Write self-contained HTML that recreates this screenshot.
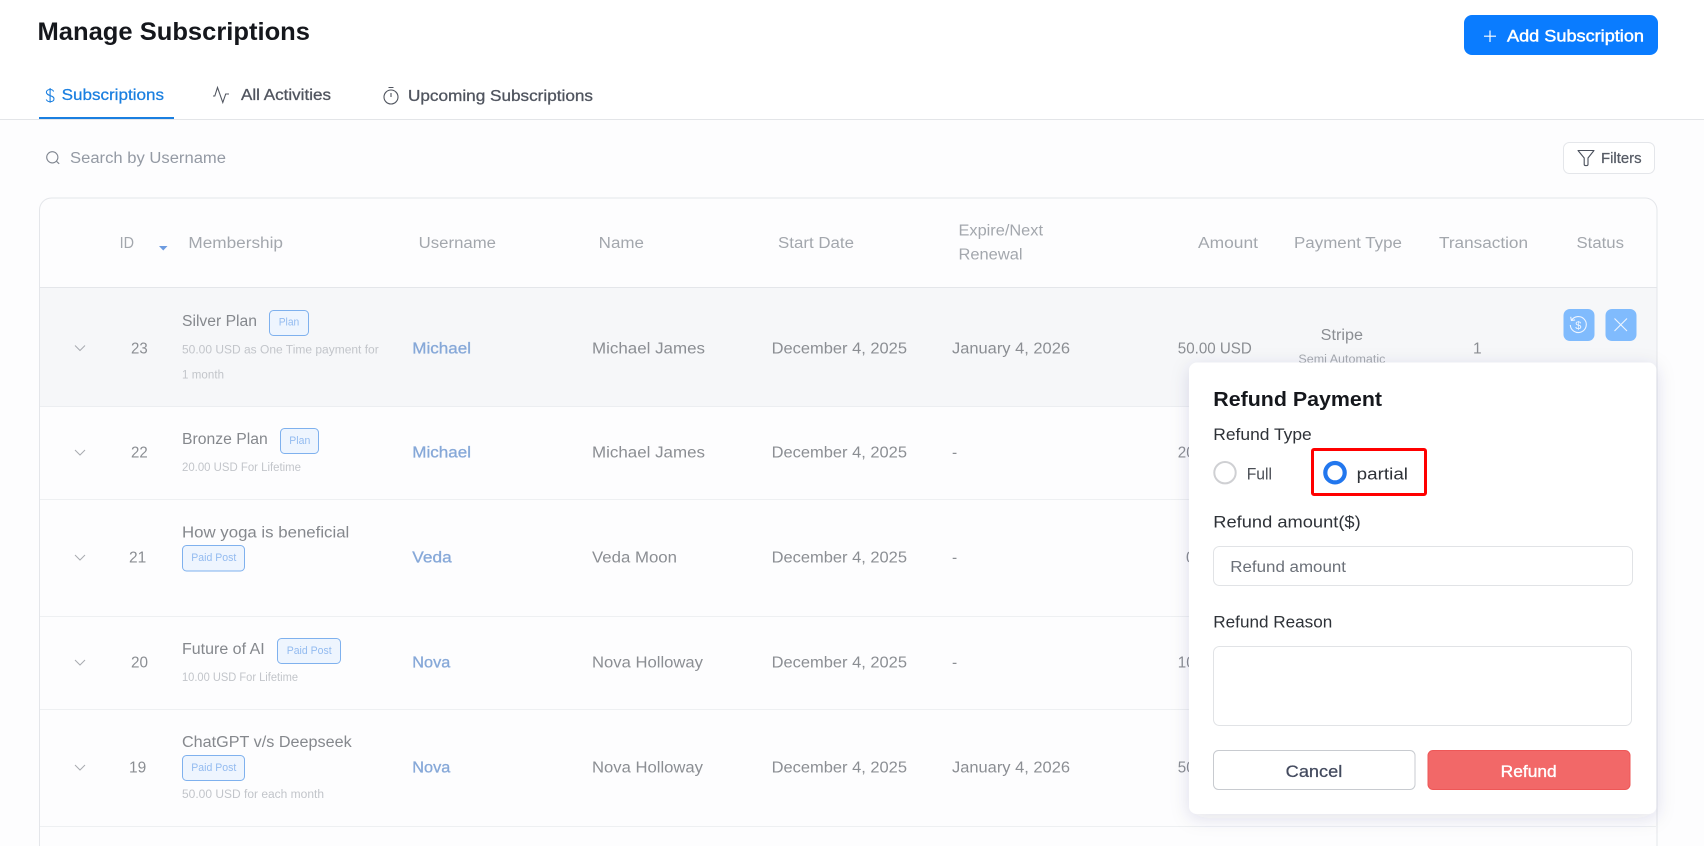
<!DOCTYPE html>
<html lang="en"><head><meta charset="utf-8"><title>Manage Subscriptions</title>
<style>
html,body{margin:0;padding:0;width:1704px;height:846px;overflow:hidden;background:#fff}
svg{display:block}
text{font-family:"Liberation Sans",Arial,sans-serif;white-space:pre}
.h{font-size:15.5px;fill:#a3a7ad}
.c{font-size:15.5px;fill:#8b8e93}
.t{font-size:15.5px;fill:#85888d}
.s{font-size:11.5px;fill:#c2c5ca}
.u{font-size:15.5px;fill:#86a8d8;stroke:#86a8d8;stroke-width:.3}
.b{font-size:11px;fill:#93bbf0}
.br{fill:#eef5fe;stroke:#7fb1ee;stroke-width:1}
.l{stroke:#eef0f2;stroke-width:1}
.chev{fill:none;stroke:#a8abb0;stroke-width:1}
.m{font-size:16.5px;fill:#2e3238}
</style></head>
<body>
<svg xmlns="http://www.w3.org/2000/svg" width="1704" height="846" viewBox="0 0 1704 846">
<rect width="1704" height="846" fill="#fff"/>
<rect y="120" width="1704" height="726" fill="#fdfdfe"/>

<!-- header -->
<text x="37.500" y="40" font-size="25" font-weight="700" fill="#15171c" textLength="272.500" lengthAdjust="spacingAndGlyphs">Manage Subscriptions</text>
<rect x="1464" y="15" width="194" height="40" rx="8" fill="#0a7cff"/>
<path d="M1490 30.500v11.500M1484 36.200h12" stroke="#fff" stroke-width="1.200" fill="none"/>
<text x="1507" y="41.700" font-size="16.500" fill="#fff" stroke="#fff" stroke-width=".45" textLength="137" lengthAdjust="spacingAndGlyphs">Add Subscription</text>

<!-- tabs -->
<path d="M53.600 91.500c-.5-1.300-1.800-2-3.400-2-2.300 0-3.800 1.100-3.800 2.800 0 4 7.600 2.600 7.600 6.600 0 1.700-1.600 2.800-3.900 2.800-1.900 0-3.300-.8-3.800-2.200M50.100 88v14.800" fill="none" stroke="#1a7fe0" stroke-width="1.100"/>
<text x="61.600" y="100" font-size="15.500" fill="#1a7fe0" stroke="#1a7fe0" stroke-width=".25" textLength="102.400" lengthAdjust="spacingAndGlyphs">Subscriptions</text>
<rect x="39" y="117" width="135" height="2.200" fill="#1a7fe0"/>
<path d="M213 96h1.800l2.700-8.500 5.300 15 2.900-8.500h3.300" fill="none" stroke="#50555f" stroke-width="1.100"/>
<text x="241" y="100" font-size="15.500" fill="#50555f" stroke="#50555f" stroke-width=".3" textLength="90" lengthAdjust="spacingAndGlyphs">All Activities</text>
<circle cx="391" cy="97" r="7" fill="none" stroke="#50555f" stroke-width="1.100"/>
<path d="M388.500 87.500h5M391 93v4" fill="none" stroke="#50555f" stroke-width="1.100"/>
<text x="408" y="101" font-size="15.500" fill="#50555f" stroke="#50555f" stroke-width=".3" textLength="185" lengthAdjust="spacingAndGlyphs">Upcoming Subscriptions</text>
<rect y="119" width="1704" height="1" fill="#e3e5e8"/>

<!-- search + filter -->
<circle cx="52.300" cy="157.300" r="5.600" fill="none" stroke="#7f858f" stroke-width="1.100"/>
<path d="M56.500 161.300l2.700 2.500" stroke="#7f858f" stroke-width="1.100"/>
<text x="70" y="163" font-size="15.500" fill="#949aa4" textLength="156" lengthAdjust="spacingAndGlyphs">Search by Username</text>
<rect x="1563.500" y="142.500" width="91" height="31" rx="6" fill="#fff" stroke="#e4e6ea"/>
<path d="M1578 150.500h16l-6 7.500v6.500c0 1.500-3.800 1.500-3.800 0v-6.500z" fill="none" stroke="#4a505c" stroke-width="1.100" stroke-linejoin="round"/>
<text x="1601" y="163" font-size="14.500" fill="#575c66" stroke="#575c66" stroke-width=".25" textLength="40.600" lengthAdjust="spacingAndGlyphs">Filters</text>

<!-- table -->
<path d="M39.500 846V210a12 12 0 0 1 12-12H1645a12 12 0 0 1 12 12V846" fill="#fdfdfe" stroke="#e4e6ea"/>
<rect x="40" y="288" width="1616.500" height="119" fill="#f6f7f9"/>
<rect x="40" y="287" width="1616.500" height="1" fill="#e4e6ea"/>

<text class="h" x="119.600" y="248" textLength="14.400" lengthAdjust="spacingAndGlyphs">ID</text>
<path d="M159 246h8.500l-4.250 4.500z" fill="#6d9be0"/>
<text class="h" x="188.400" y="248" textLength="94.600" lengthAdjust="spacingAndGlyphs">Membership</text>
<text class="h" x="418.700" y="248" textLength="77.300" lengthAdjust="spacingAndGlyphs">Username</text>
<text class="h" x="598.700" y="248" textLength="45.300" lengthAdjust="spacingAndGlyphs">Name</text>
<text class="h" x="778" y="248" textLength="76" lengthAdjust="spacingAndGlyphs">Start Date</text>
<text class="h" x="958.500" y="235.500" textLength="84.500" lengthAdjust="spacingAndGlyphs">Expire/Next</text>
<text class="h" x="958.500" y="259.500" textLength="64" lengthAdjust="spacingAndGlyphs">Renewal</text>
<text class="h" x="1198" y="248" textLength="60" lengthAdjust="spacingAndGlyphs">Amount</text>
<text class="h" x="1294" y="248" textLength="108" lengthAdjust="spacingAndGlyphs">Payment Type</text>
<text class="h" x="1439" y="248" textLength="89" lengthAdjust="spacingAndGlyphs">Transaction</text>
<text class="h" x="1576.500" y="248" textLength="47.500" lengthAdjust="spacingAndGlyphs">Status</text>

<!-- row lines -->
<path class="l" d="M40 499.500H1656M40 616.500H1656M40 709.500H1656M40 826.500H1656"/>
<path d="M40 406.500H1656" stroke="#eceef1"/>

<!-- row 23 -->
<path class="chev" d="M75 345.500l5 5 5-5"/>
<text class="c" x="131" y="353.300" textLength="16.700" lengthAdjust="spacingAndGlyphs">23</text>
<text class="t" x="182" y="326" textLength="75" lengthAdjust="spacingAndGlyphs">Silver Plan</text>
<rect class="br" x="269.500" y="310.500" width="39" height="25" rx="4"/>
<text class="b" x="278.700" y="325.700" textLength="20.600" lengthAdjust="spacingAndGlyphs">Plan</text>
<text class="s" x="182" y="353.300" textLength="196.700" lengthAdjust="spacingAndGlyphs">50.00 USD as One Time payment for</text>
<text class="s" x="182" y="378.300" textLength="42" lengthAdjust="spacing">1 month</text>
<text class="u" x="412.300" y="353.300" textLength="58.700" lengthAdjust="spacingAndGlyphs">Michael</text>
<text class="c" x="592" y="353.300" textLength="113" lengthAdjust="spacingAndGlyphs">Michael James</text>
<text class="c" x="771.600" y="353.300" textLength="135.400" lengthAdjust="spacingAndGlyphs">December 4, 2025</text>
<text class="c" x="952" y="353.300" textLength="118" lengthAdjust="spacingAndGlyphs">January 4, 2026</text>
<text class="c" x="1177.800" y="353.300" textLength="74" lengthAdjust="spacingAndGlyphs">50.00 USD</text>
<text class="c" x="1320.700" y="340" textLength="42.300" lengthAdjust="spacingAndGlyphs">Stripe</text>
<text x="1298.400" y="363" font-size="11.500" fill="#a5a9ae" textLength="87" lengthAdjust="spacingAndGlyphs">Semi Automatic</text>
<text class="c" x="1473" y="353.300">1</text>
<rect x="1563.500" y="309" width="31" height="32" rx="6.500" fill="#80bbfd"/>
<rect x="1605.500" y="309" width="31" height="32" rx="6.500" fill="#80bbfd"/>
<path d="M1571.500 320.300a8 8 0 1 1-1.200 4.700M1570.700 316.800l.7 3.700 3.700-.6" fill="none" stroke="#eef5ff" stroke-width="1.100"/>
<text x="1575.300" y="329" font-size="11" fill="#eef5ff">$</text>
<path d="M1614.500 318.500l12.500 12.500M1627 318.500l-12.500 12.500" stroke="#eef5ff" stroke-width="1.100"/>

<!-- row 22 -->
<path class="chev" d="M75 450l5 5 5-5"/>
<text class="c" x="131" y="457.700" textLength="16.700" lengthAdjust="spacingAndGlyphs">22</text>
<text class="t" x="182" y="444" textLength="85.700" lengthAdjust="spacingAndGlyphs">Bronze Plan</text>
<rect class="br" x="280.500" y="428.500" width="38" height="25" rx="4"/>
<text class="b" x="289.300" y="444" textLength="21" lengthAdjust="spacingAndGlyphs">Plan</text>
<text class="s" x="182" y="471" textLength="119" lengthAdjust="spacingAndGlyphs">20.00 USD For Lifetime</text>
<text class="u" x="412.300" y="457.700" textLength="58.700" lengthAdjust="spacingAndGlyphs">Michael</text>
<text class="c" x="592" y="457.700" textLength="113" lengthAdjust="spacingAndGlyphs">Michael James</text>
<text class="c" x="771.600" y="457.700" textLength="135.400" lengthAdjust="spacingAndGlyphs">December 4, 2025</text>
<text class="c" x="952" y="457.700">-</text>
<text class="c" x="1177.800" y="457.700" textLength="74" lengthAdjust="spacingAndGlyphs">20.00 USD</text>

<!-- row 21 -->
<path class="chev" d="M75 555l5 5 5-5"/>
<text class="c" x="129" y="562.700">21</text>
<text class="t" x="182" y="537.300" textLength="167.300" lengthAdjust="spacingAndGlyphs">How yoga is beneficial</text>
<rect class="br" x="182.500" y="545.500" width="62" height="25.500" rx="4"/>
<text class="b" x="191.300" y="561" textLength="45" lengthAdjust="spacingAndGlyphs">Paid Post</text>
<text class="u" x="412.300" y="562.700" textLength="39.400" lengthAdjust="spacingAndGlyphs">Veda</text>
<text class="c" x="592" y="562.700" textLength="85" lengthAdjust="spacingAndGlyphs">Veda Moon</text>
<text class="c" x="771.600" y="562.700" textLength="135.400" lengthAdjust="spacingAndGlyphs">December 4, 2025</text>
<text class="c" x="952" y="562.700">-</text>
<text class="c" x="1186" y="562.700" textLength="66" lengthAdjust="spacingAndGlyphs">0.00 USD</text>

<!-- row 20 -->
<path class="chev" d="M75 660l5 5 5-5"/>
<text class="c" x="131" y="667.700" textLength="17" lengthAdjust="spacingAndGlyphs">20</text>
<text class="t" x="182" y="654" textLength="82.700" lengthAdjust="spacingAndGlyphs">Future of AI</text>
<rect class="br" x="277.500" y="638.500" width="63" height="25" rx="4"/>
<text class="b" x="286.700" y="654" textLength="45" lengthAdjust="spacingAndGlyphs">Paid Post</text>
<text class="s" x="182" y="681" textLength="116" lengthAdjust="spacingAndGlyphs">10.00 USD For Lifetime</text>
<text class="u" x="412.300" y="667.700" textLength="38" lengthAdjust="spacingAndGlyphs">Nova</text>
<text class="c" x="592" y="667.700" textLength="111" lengthAdjust="spacingAndGlyphs">Nova Holloway</text>
<text class="c" x="771.600" y="667.700" textLength="135.400" lengthAdjust="spacingAndGlyphs">December 4, 2025</text>
<text class="c" x="952" y="667.700">-</text>
<text class="c" x="1177.800" y="667.700" textLength="74" lengthAdjust="spacingAndGlyphs">10.00 USD</text>

<!-- row 19 -->
<path class="chev" d="M75 765l5 5 5-5"/>
<text class="c" x="129" y="772.700">19</text>
<text class="t" x="182" y="747" textLength="169.700" lengthAdjust="spacingAndGlyphs">ChatGPT v/s Deepseek</text>
<rect class="br" x="182.500" y="755.500" width="62" height="25" rx="4"/>
<text class="b" x="191.300" y="771" textLength="45" lengthAdjust="spacingAndGlyphs">Paid Post</text>
<text class="s" x="182" y="798" textLength="142" lengthAdjust="spacingAndGlyphs">50.00 USD for each month</text>
<text class="u" x="412.300" y="772.700" textLength="38" lengthAdjust="spacingAndGlyphs">Nova</text>
<text class="c" x="592" y="772.700" textLength="111" lengthAdjust="spacingAndGlyphs">Nova Holloway</text>
<text class="c" x="771.600" y="772.700" textLength="135.400" lengthAdjust="spacingAndGlyphs">December 4, 2025</text>
<text class="c" x="952" y="772.700" textLength="118" lengthAdjust="spacingAndGlyphs">January 4, 2026</text>
<text class="c" x="1177.800" y="772.700" textLength="74" lengthAdjust="spacingAndGlyphs">50.00 USD</text>

<!-- popup -->
<defs><filter id="sh" x="-15%" y="-15%" width="130%" height="130%"><feDropShadow dx="0" dy="4" stdDeviation="9" flood-color="#2a3560" flood-opacity=".13"/></filter></defs>
<rect x="1189" y="362.500" width="467.500" height="451.500" rx="8" fill="#fff" filter="url(#sh)"/>
<text x="1213.300" y="406" font-size="20.500" font-weight="700" fill="#15171c" textLength="168.700" lengthAdjust="spacingAndGlyphs">Refund Payment</text>
<text class="m" x="1213.300" y="440" textLength="98.400" lengthAdjust="spacingAndGlyphs">Refund Type</text>
<circle cx="1225" cy="472.700" r="10.700" fill="#fff" stroke="#cfd0d3" stroke-width="2"/>
<text class="m" x="1246.700" y="479.300" style="fill:#4a4e55" textLength="25.300" lengthAdjust="spacingAndGlyphs">Full</text>
<rect x="1312.500" y="449.500" width="113" height="45" rx="1.500" fill="#fff" stroke="#f00" stroke-width="3"/>
<circle cx="1335" cy="472.700" r="9.700" fill="#fff" stroke="#2277ee" stroke-width="4.200"/>
<text class="m" x="1356.700" y="479.300" textLength="51.300" lengthAdjust="spacingAndGlyphs">partial</text>
<text class="m" x="1213.300" y="527.300" textLength="147.400" lengthAdjust="spacingAndGlyphs">Refund amount($)</text>
<rect x="1213.500" y="546.500" width="419" height="39" rx="6" fill="#fff" stroke="#e1e3e6"/>
<text x="1230.300" y="572" font-size="15.500" fill="#6b7078" textLength="115.700" lengthAdjust="spacingAndGlyphs">Refund amount</text>
<text class="m" x="1213.300" y="627.300" textLength="119" lengthAdjust="spacingAndGlyphs">Refund Reason</text>
<rect x="1213.500" y="646.500" width="418" height="79" rx="6" fill="#fff" stroke="#e1e3e6"/>
<rect x="1213.500" y="750.500" width="201.500" height="39" rx="5" fill="#fff" stroke="#c8cbd0"/>
<text x="1285.700" y="777" font-size="16.500" fill="#434a5e" stroke="#434a5e" stroke-width=".25" textLength="56.600" lengthAdjust="spacingAndGlyphs">Cancel</text>
<rect x="1428" y="750.500" width="202" height="39" rx="5" fill="#f26868" stroke="#ee5757"/>
<text x="1500.700" y="777" font-size="16.500" fill="#fff" stroke="#fff" stroke-width=".35" textLength="56" lengthAdjust="spacingAndGlyphs">Refund</text>
</svg>
</body></html>
